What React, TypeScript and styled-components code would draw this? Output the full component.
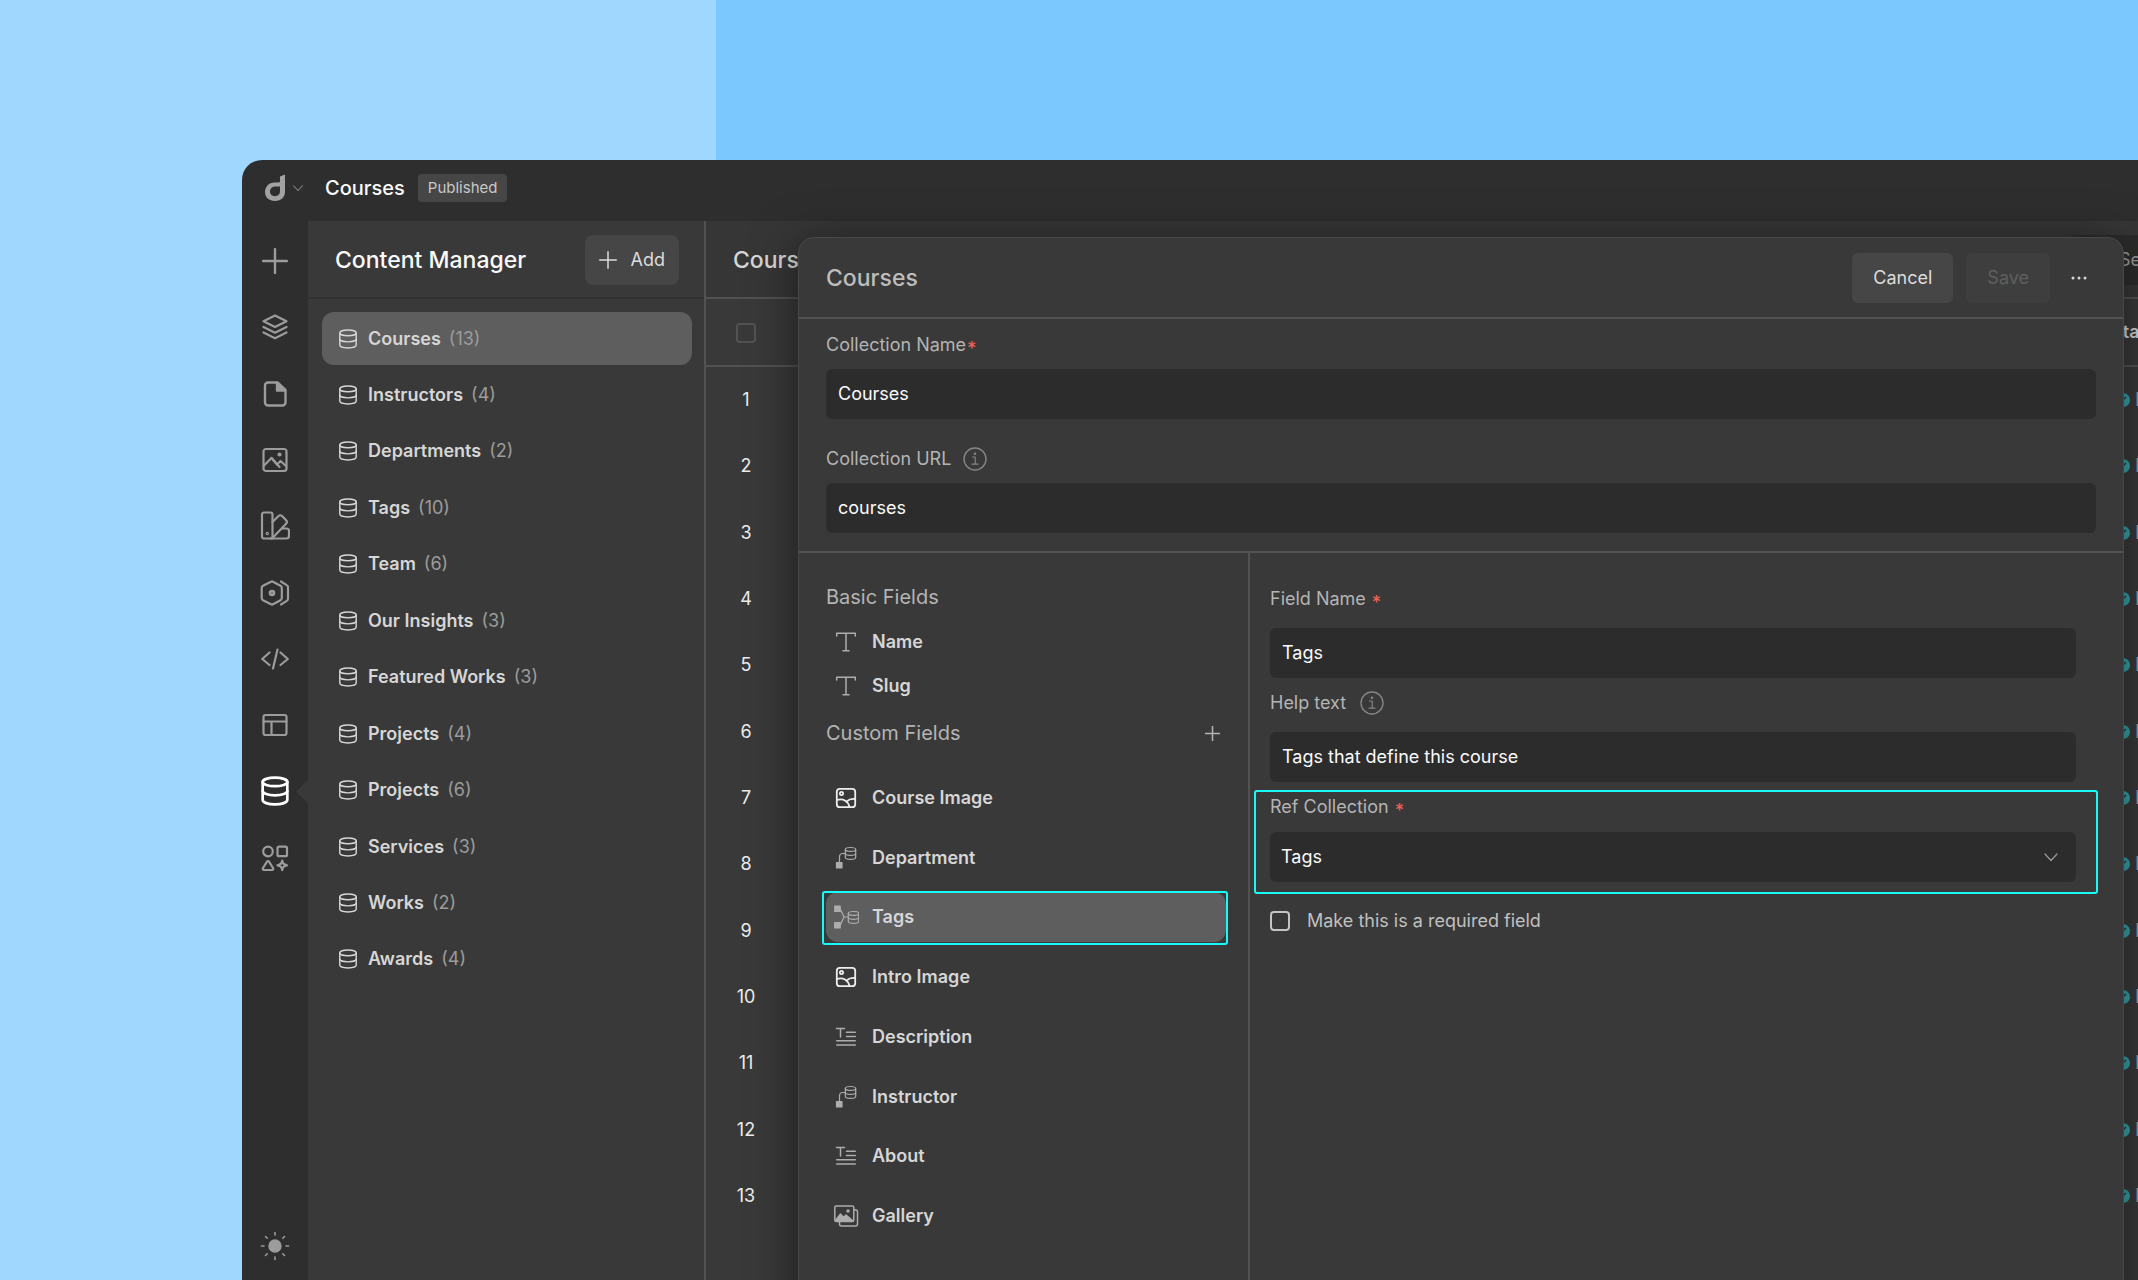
import React from "react";
import styled, { createGlobalStyle, css } from "styled-components";

const GlobalStyle = createGlobalStyle`
  *, *::before, *::after { box-sizing: border-box; }
  body {
    margin: 0;
    overflow: hidden;
    font-family: Inter, "Liberation Sans", sans-serif;
    font-size: 18px;
    line-height: 28px;
    background: #7bc7ff;
  }
  button, input, select { font: inherit; }
  h1, h2, h3, ul { margin: 0; padding: 0; font-weight: 400; }
  ul { list-style: none; }
`;

const color = {
  bar: "#2e2e2e",
  panel: "#393939",
  line: "#525252",
  field: "#2c2c2c",
  button: "#464646",
  selected: "#5e5e5e",
  white: "#fafafa",
  text: "#d6d6d6",
  label: "#b4b4b4",
  muted: "#9c9c9c",
  accent: "#18faf7",
  danger: "#ea6157",
};

/* ---------- icons ---------- */

type IconProps = { size?: number; width?: number };

const Stroke = ({ size = 24, width = 2, box = 24, children }: IconProps & { box?: number; children: React.ReactNode }) => (
  <svg width={size} height={size} viewBox={`0 0 ${box} ${box}`} fill="none" stroke="currentColor" strokeWidth={width} strokeLinecap="round" strokeLinejoin="round" aria-hidden="true">
    {children}
  </svg>
);

const Logo = () => (
  <svg width="24" height="30" viewBox="0 0 24 30" fill="currentColor" aria-hidden="true">
    <path fillRule="evenodd" d="M22 1.5V19c0 5-4 9-10 9S2 24.5 2 19.3C2 13.5 6 9.5 11.5 9.5c3 0 4.5.2 5.5-.7V3.5L22 1.5ZM17 13.6h-4.8c-3 0-5.2 2.2-5.2 5.2 0 2.6 2 4.4 4.9 4.4 3 0 5.1-2 5.1-4.7v-4.900Z" />
  </svg>
);

const ChevronIcon = ({ size = 16, width = 1.2 }: IconProps) => (
  <Stroke size={size} width={width} box={16}><path d="M2 5 8 11.500 14 5" /></Stroke>
);
const PlusIcon = ({ size = 24, width = 2 }: IconProps) => (
  <Stroke size={size} width={width}><path d="M12 1v22M1 12h22" /></Stroke>
);
const LayersIcon = () => (
  <Stroke size={28} width={2.2} box={28}>
    <path d="M14 2.5 25.5 8.300 14 14 2.5 8.300Z" />
    <path d="M2.5 14 14 19.7 25.5 14" />
    <path d="M2.5 19.5 14 25.2 25.5 19.5" />
  </Stroke>
);
const PageIcon = () => (
  <Stroke size={28} width={2.4} box={28}>
    <path d="M7 2.5h9.500L24.500 10v12.500a3 3 0 0 1-3 3H7a3 3 0 0 1-3-3V5.500a3 3 0 0 1 3-3Z" />
    <path d="M16 3v7.500h8Z" fill="currentColor" />
  </Stroke>
);
const ImageIcon = () => (
  <Stroke size={28} width={2.2} box={28}>
    <rect x="2.500" y="3" width="23" height="22" rx="2.500" />
    <path d="m3 19.500 7.500-7.500 5.500 6.500 3.500-3.500 5.500 5" />
    <path d="m10.500 12 8 9" />
    <circle cx="18.500" cy="8.500" r="1" fill="currentColor" />
  </Stroke>
);
const SwatchIcon = () => (
  <Stroke size={30} width={2.2} box={30}>
    <path d="M4 1.500h6.500a2 2 0 0 1 2 2V27.500H4a2 2 0 0 1-2-2v-22a2 2 0 0 1 2-2Z" />
    <path d="m12.500 11 6-6a2.500 2.500 0 0 1 3.600 0l4 4.200a2.500 2.500 0 0 1 0 3.500L12.500 27" />
    <path d="M22 17.500h4.500a2.500 2.500 0 0 1 2.500 2.500v5a2.500 2.500 0 0 1-2.500 2.500H10.500" />
    <circle cx="7.300" cy="22.500" r="0.600" />
  </Stroke>
);
const ComponentIcon = () => (
  <Stroke size={30} width={2.2} box={30}>
    <path d="M11 3.700a2 2 0 0 1 2 0l7.500 4a2.500 2.500 0 0 1 1.300 2.200v10.200a2.500 2.500 0 0 1-1.300 2.200l-7.500 4a2 2 0 0 1-2 0l-8-4a2.500 2.500 0 0 1-1.300-2.200V9.900A2.500 2.500 0 0 1 3 7.700Z" />
    <path d="m21 3.500 5.700 3.600A2.500 2.500 0 0 1 28 9.300v11.400a2.500 2.500 0 0 1-1.300 2.200L21 26.500" />
    <circle cx="12" cy="15" r="2.200" fill="#777" />
  </Stroke>
);
const CodeIcon = () => (
  <Stroke size={28} width={2.2} box={28}>
    <path d="M8.500 7.500 1.200 14l7.300 6M19.500 7.500l7.300 6.500-7.300 6M16.500 4.500l-4.500 19" />
  </Stroke>
);
const LayoutIcon = () => (
  <Stroke size={28} width={2.2} box={28}>
    <rect x="2.500" y="4" width="23" height="20" rx="2" />
    <path d="M2.500 10.500h23M10.500 10.500V24" />
  </Stroke>
);
const DatabaseIcon = ({ size = 20, width = 2 }: IconProps) => (
  <Stroke size={size} width={width} box={28}>
    <ellipse cx="14" cy="5.500" rx="11.500" ry="4" />
    <path d="M2.500 5.500v17c0 2.200 5 4 11.500 4s11.500-1.800 11.500-4v-17" />
    <path d="M2.500 14c0 2.200 5 4 11.500 4s11.500-1.800 11.500-4" />
  </Stroke>
);
const ShapesIcon = () => (
  <Stroke size={28} width={2.2} box={28}>
    <circle cx="7" cy="7.500" r="4.800" />
    <rect x="16.500" y="2.700" width="9.500" height="9.500" rx="1.500" />
    <path d="M6 17.700a1.200 1.200 0 0 1 2 0l4 6.300a1.200 1.200 0 0 1-1 2H3a1.200 1.200 0 0 1-1-2Z" />
    <path d="M21.200 16.500c.7 3.300 1.500 4.100 4.800 4.800-3.300.7-4.100 1.500-4.800 4.800-.7-3.300-1.500-4.100-4.800-4.800 3.300-.7 4.100-1.500 4.800-4.800Z" />
  </Stroke>
);
const SunIcon = () => (
  <Stroke size={30} width={2} box={30}>
    <circle cx="15" cy="15" r="5.700" fill="currentColor" />
    <path d="M15 1.500v2.500M15 26v2.500M1.500 15H4M26 15h2.500M5.500 5.500l1.700 1.700M22.800 22.800l1.700 1.700M5.500 24.500l1.700-1.700M22.800 7.200l1.700-1.700" strokeWidth="1.600" />
  </Stroke>
);

const TextIcon = () => (
  <Stroke size={26} width={1.5} box={26}>
    <path d="M3.700 7V4.200h18.600V7M13 4.200v17.500M10 21.800h6" />
  </Stroke>
);
const PictureIcon = () => (
  <Stroke size={26} width={1.8} box={26}>
    <rect x="3.800" y="3.800" width="18.400" height="18.400" rx="3" />
    <circle cx="8.500" cy="8.500" r="1.600" />
    <path d="M4 15c6-2 11 1 12.500 7M13.500 16.500c3-2.500 5.500-3 8.500-2.500" />
  </Stroke>
);
const SmallDatabase = ({ x, y }: { x: number; y: number }) => (
  <g transform={`translate(${x} ${y})`} strokeWidth="1.200">
    <ellipse cx="5.500" cy="2.400" rx="5.200" ry="1.900" />
    <path d="M.3 2.400v7.800c0 1.200 2.200 2.100 5.200 2.100s5.200-.9 5.200-2.100V2.400M.3 6.200c0 1.200 2.200 2.100 5.200 2.100s5.200-.9 5.200-2.100" />
  </g>
);
const RefIcon = () => (
  <Stroke size={26} width={1.2} box={26}>
    <SmallDatabase x={12} y={2} />
    <path d="M12 8.500H9.500a3 3 0 0 0-3 3V18" />
    <rect x="3.500" y="17.500" width="5.500" height="5.500" fill="currentColor" />
  </Stroke>
);
const MultiRefIcon = () => (
  <Stroke size={26} width={1.2} box={26}>
    <SmallDatabase x={15} y={7} />
    <path d="M7.500 5.500 11 13l-3.500 7.500M11 13h4" />
    <rect x="1.700" y="2" width="5.500" height="5.500" fill="currentColor" />
    <rect x="1.700" y="18.500" width="5.500" height="5.500" fill="currentColor" />
  </Stroke>
);
const RichTextIcon = () => (
  <Stroke size={26} width={1.5} box={26}>
    <path d="M3.500 4.500h8M7.500 4.500V13M13.500 8.200h8.800M13.500 12.500h8.800M3.700 16.800h18.600M3.700 21h18.600" />
  </Stroke>
);
const GalleryIcon = () => (
  <Stroke size={26} width={1.5} box={26}>
    <rect x="1.800" y="3" width="19" height="15.500" rx="1.500" />
    <path d="m2.500 17.500 5-6.500 3 3.500 2.500-2.500 6.500 5.500Z" fill="currentColor" />
    <circle cx="15" cy="8" r="1" fill="currentColor" />
    <path d="M21 7h2a1.500 1.500 0 0 1 1.500 1.500V21a2 2 0 0 1-2 2h-14a2 2 0 0 1-2-2v-2.500" />
  </Stroke>
);
const InfoIcon = () => (
  <Stroke size={24} width={1.4} box={24}>
    <circle cx="12" cy="12" r="11" />
    <path d="M9.500 10h2.700v7M9 17.200h6" strokeWidth="1.200" />
    <circle cx="12" cy="6.800" r="0.600" fill="currentColor" />
  </Stroke>
);
const MoreIcon = () => (
  <svg width="16" height="4" viewBox="0 0 16 4" fill="currentColor" aria-hidden="true">
    <circle cx="2" cy="2" r="1.500" /><circle cx="8" cy="2" r="1.500" /><circle cx="14" cy="2" r="1.500" />
  </svg>
);
const CheckDot = () => (
  <svg width="14" height="14" viewBox="0 0 14 14" fill="none" aria-hidden="true">
    <circle cx="7" cy="7" r="7" fill="#36a3a8" />
    <path d="m4 6 2 2 4-4" stroke="#2c3a3c" strokeWidth="1.500" />
  </svg>
);

/* ---------- shell ---------- */

const Backdrop = styled.div`
  height: 100vh;
  padding: 160px 0 0 242px;
  overflow: hidden;
  background: linear-gradient(to right, #a0d7ff 716px, #7bc7ff 716px);
`;

const Window = styled.div`
  position: relative;
  display: grid;
  grid-template: 61px minmax(0, 1fr) / 66px 398px minmax(0, 1fr);
  height: 100%;
  margin-right: -160px;
  border-top-left-radius: 20px;
  overflow: hidden;
  background: ${color.bar};
  color: ${color.text};
`;

const TopBar = styled.header`
  grid-column: 1 / -1;
  display: flex;
  align-items: center;
  padding: 0 21px 6px;
`;

const LogoButton = styled.button`
  display: flex;
  align-items: center;
  gap: 5px;
  width: 62px;
  padding: 0;
  border: 0;
  background: none;
  color: #a2a2a2;
`;

const PageName = styled.h1`
  font-size: 20px;
  font-weight: 500;
  color: ${color.white};
`;

const Badge = styled.span`
  margin-left: 13px;
  padding: 0 10px;
  border-radius: 4px;
  background: ${color.button};
  color: #c8c8c8;
  font-size: 15px;
`;

const Rail = styled.nav`
  display: flex;
  flex-direction: column;
  justify-content: space-between;
  padding: 7px 0 1px;
`;

const RailList = styled.ul`
  display: grid;
  grid-auto-rows: 1fr;
  height: 663px;
`;

const RailItem = styled.li<{ $active?: boolean }>`
  position: relative;
  ${({ $active }) => $active && css`
    &::after {
      content: "";
      position: absolute;
      right: 0;
      top: 50%;
      width: 12px;
      height: 24px;
      margin-top: -12px;
      background: ${color.panel};
      clip-path: polygon(0 50%, 100% 0, 100% 100%);
    }
  `}
`;

const RailButton = styled.button<{ $active?: boolean }>`
  display: flex;
  align-items: center;
  justify-content: center;
  width: 100%;
  height: 66px;
  padding: 0;
  border: 0;
  background: none;
  color: ${({ $active }) => ($active ? "#ffffff" : "#9c9c9c")};
`;

/* ---------- collections panel ---------- */

const Panel = styled.aside`
  border-right: 2px solid ${color.line};
  background: ${color.panel};
`;

const PanelHeader = styled.div`
  display: flex;
  align-items: center;
  justify-content: space-between;
  height: 78px;
  padding: 1px 25px 0 27px;
  border-bottom: 2px solid #323232;
`;

const PanelTitle = styled.h2`
  font-size: 23px;
  font-weight: 500;
  color: ${color.white};
`;

const Button = styled.button`
  display: flex;
  align-items: center;
  justify-content: center;
  height: 50px;
  padding: 0 21px;
  border: 0;
  border-radius: 6px;
  background: ${color.button};
  color: #dcdcdc;
  &:disabled { background: #3e3e3e; color: #5f5f5f; }
`;

const AddButton = styled(Button)`
  gap: 14px;
  padding: 0 14px;
  border-radius: 8px;
`;

const CollectionList = styled.ul`
  display: grid;
  grid-auto-rows: 53px;
  align-content: space-between;
  height: 674px;
  margin: 13px 12px 0 14px;
`;

const CollectionButton = styled.button<{ $selected?: boolean }>`
  display: flex;
  align-items: center;
  width: 100%;
  height: 100%;
  padding: 0 16px;
  border: 0;
  border-radius: 12px;
  background: ${({ $selected }) => ($selected ? color.selected : "none")};
  color: ${color.text};
  font-weight: 600;
`;

const CollectionName = styled.span`
  margin: 0 8px 0 10px;
`;

const Count = styled.span`
  color: ${color.muted};
  font-weight: 400;
`;

/* ---------- items table ---------- */

const Main = styled.main`
  background: ${color.panel};
  min-width: 0;
`;

const MainHeader = styled.div`
  display: flex;
  align-items: center;
  justify-content: space-between;
  height: 78px;
  padding: 1px 29px 0 27px;
  border-bottom: 2px solid ${color.line};
  background: #363636;
`;

const MainTitle = styled.h2`
  font-size: 23px;
  font-weight: 500;
`;

const Search = styled.input`
  width: 200px;
  height: 50px;
  padding: 0 12px 0 50px;
  border: 0;
  border-radius: 6px;
  background: ${color.field};
  &::placeholder { color: ${color.muted}; opacity: 1; }
`;

const Table = styled.table`
  width: 100%;
  border-collapse: separate;
  border-spacing: 0;
  table-layout: fixed;
  th, td { padding: 0; }
`;

const HeadRow = styled.tr`
  height: 68px;
  th { border-bottom: 2px solid ${color.line}; }
`;

const IndexHead = styled.th`
  width: 80px;
  line-height: 20px;
`;

const StatusHead = styled.th`
  width: 190px;
  text-align: left;
  text-indent: 3px;
  font-weight: 600;
`;

const ItemRow = styled.tr`
  height: 66px;
  &:nth-child(3n) { height: 67px; }
`;

const IndexCell = styled.td`
  text-align: center;
  color: #ececec;
`;

const Status = styled.span`
  display: flex;
  align-items: center;
  gap: 5px;
  margin-left: 8px;
  color: ${color.muted};
`;

const CheckBox = styled.input<{ $bright?: boolean }>`
  appearance: none;
  width: 20px;
  height: 20px;
  margin: 0;
  vertical-align: middle;
  border: 2px solid ${({ $bright }) => ($bright ? "#c4c4c4" : color.line)};
  border-radius: 4px;
`;

/* ---------- settings dialog ---------- */

const Dialog = styled.section`
  position: absolute;
  top: 77px;
  bottom: -40px;
  left: 556px;
  right: 174px;
  display: flex;
  flex-direction: column;
  border: 1px solid #484848;
  border-radius: 16px 16px 0 0;
  background: ${color.panel};
  box-shadow: 0 8px 48px rgba(0, 0, 0, 0.5);
`;

const DialogHeader = styled.div`
  display: flex;
  align-items: center;
  height: 81px;
  padding: 0 28px 0 27px;
  border-bottom: 2px solid ${color.line};
`;

const DialogTitle = styled.h2`
  flex: 1;
  font-size: 23px;
  font-weight: 500;
  color: #bdbdbd;
`;

const DialogActions = styled.div`
  display: flex;
  align-items: center;
  gap: 13px;
`;

const MoreButton = styled.button`
  display: flex;
  align-items: center;
  justify-content: center;
  width: 32px;
  height: 32px;
  padding: 0;
  border: 0;
  background: none;
  color: ${color.text};
`;

const CollectionForm = styled.div`
  display: flex;
  flex-direction: column;
  gap: 26px;
  padding: 12px 27px 18px;
  border-bottom: 2px solid ${color.line};
`;

const Field = styled.div<{ $gap: number }>`
  display: flex;
  flex-direction: column;
  gap: ${({ $gap }) => $gap}px;
`;

const Label = styled.label<{ $space?: number }>`
  display: flex;
  align-items: center;
  gap: ${({ $space = 0 }) => $space}px;
  color: ${color.label};
`;

const Required = styled.span`
  align-self: flex-end;
  line-height: 20px;
  font-weight: 500;
  color: ${color.danger};
`;

const InfoMark = styled.span`
  display: flex;
  color: #858585;
`;

const control = css`
  width: 100%;
  height: 50px;
  border: 0;
  border-radius: 6px;
  background: ${color.field};
  color: ${color.white};
`;

const TextBox = styled.input`
  ${control}
  padding: 0 12px 2px;
`;

const SelectWrap = styled.div`
  display: grid;
  align-items: center;
  > * { grid-area: 1 / 1; }
`;

const Select = styled.select`
  ${control}
  padding: 0 11px;
  appearance: none;
`;

const SelectArrow = styled.span`
  display: flex;
  justify-self: end;
  margin-right: 17px;
  color: #9a9a9a;
  pointer-events: none;
`;

const DialogBody = styled.div`
  flex: 1;
  display: grid;
  grid-template-columns: 451px minmax(0, 1fr);
`;

const FieldsColumn = styled.div`
  padding: 30px 22px 0 27px;
  border-right: 2px solid ${color.line};
`;

const GroupHeader = styled.div`
  display: flex;
  align-items: center;
  justify-content: space-between;
  padding-right: 6px;
  color: ${color.label};
`;

const GroupTitle = styled.h3`
  font-size: 20px;
`;

const GhostButton = styled.button`
  display: flex;
  padding: 0;
  border: 0;
  background: none;
  color: inherit;
`;

const BasicList = styled.ul`
  display: grid;
  grid-auto-rows: 44px;
  padding: 9px 0 11px;
`;

const CustomList = styled.ul`
  display: grid;
  grid-auto-rows: 50px;
  align-content: space-between;
  height: 468px;
  margin-top: 26px;
`;

const FieldItem = styled.li<{ $selected?: boolean }>`
  position: relative;
  ${({ $selected }) => $selected && css`
    &::after {
      content: "";
      position: absolute;
      inset: -1px -2px -3px -4px;
      border: 2px solid ${color.accent};
      border-radius: 3px;
      pointer-events: none;
    }
  `}
`;

const FieldButton = styled.button<{ $selected?: boolean; $bright?: boolean }>`
  display: flex;
  align-items: center;
  gap: 13px;
  width: 100%;
  height: 100%;
  padding: 0 7px;
  border: 0;
  border-radius: 12px;
  background: ${({ $selected }) => ($selected ? color.selected : "none")};
  color: ${color.text};
  font-weight: 600;
  svg { color: ${({ $bright }) => ($bright ? "#ededed" : "#adadad")}; }
`;

const SettingsColumn = styled.div`
  display: flex;
  flex-direction: column;
  gap: 11px;
  padding: 32px 47px 0 20px;
`;

const Highlighted = styled.div`
  position: relative;
  &::after {
    content: "";
    position: absolute;
    inset: -3px -22px -12px -16px;
    border: 2px solid ${color.accent};
    border-radius: 3px;
    pointer-events: none;
  }
`;

const CheckLabel = styled.label`
  display: flex;
  align-items: center;
  gap: 17px;
  padding-top: 14px;
  color: #c0c0c0;
`;

/* ---------- data ---------- */

const railItems = [
  { name: "Add", icon: <PlusIcon size={26} width={2.2} /> },
  { name: "Layers", icon: <LayersIcon /> },
  { name: "Pages", icon: <PageIcon /> },
  { name: "Media", icon: <ImageIcon /> },
  { name: "Styles", icon: <SwatchIcon /> },
  { name: "Components", icon: <ComponentIcon /> },
  { name: "Code", icon: <CodeIcon /> },
  { name: "Layouts", icon: <LayoutIcon /> },
  { name: "Content", icon: <DatabaseIcon size={30} width={2.5} />, active: true },
  { name: "Apps", icon: <ShapesIcon /> },
];

const collections: [string, number][] = [
  ["Courses", 13], ["Instructors", 4], ["Departments", 2], ["Tags", 10], ["Team", 6], ["Our Insights", 3],
  ["Featured Works", 3], ["Projects", 4], ["Projects", 6], ["Services", 3], ["Works", 2], ["Awards", 4],
];

const customFields = [
  { name: "Course Image", icon: <PictureIcon />, bright: true },
  { name: "Department", icon: <RefIcon /> },
  { name: "Tags", icon: <MultiRefIcon />, selected: true },
  { name: "Intro Image", icon: <PictureIcon />, bright: true },
  { name: "Description", icon: <RichTextIcon /> },
  { name: "Instructor", icon: <RefIcon /> },
  { name: "About", icon: <RichTextIcon /> },
  { name: "Gallery", icon: <GalleryIcon /> },
];

const rows = Array.from({ length: 13 }, (_, i) => i + 1);

export default function App() {
  return (
    <Backdrop>
      <GlobalStyle />
      <Window>
        <TopBar>
          <LogoButton aria-label="Main menu"><Logo /><ChevronIcon size={12} width={1.3} /></LogoButton>
          <PageName>Courses</PageName>
          <Badge>Published</Badge>
        </TopBar>

        <Rail aria-label="Tools">
          <RailList>
            {railItems.map((item) => (
              <RailItem key={item.name} $active={item.active}>
                <RailButton $active={item.active} aria-label={item.name}>{item.icon}</RailButton>
              </RailItem>
            ))}
          </RailList>
          <RailButton aria-label="Theme"><SunIcon /></RailButton>
        </Rail>

        <Panel>
          <PanelHeader>
            <PanelTitle>Content Manager</PanelTitle>
            <AddButton><PlusIcon size={18} width={2} />Add</AddButton>
          </PanelHeader>
          <CollectionList>
            {collections.map(([name, count], i) => (
              <li key={i}>
                <CollectionButton $selected={i === 0}>
                  <DatabaseIcon />
                  <CollectionName>{name}</CollectionName>
                  <Count>({count})</Count>
                </CollectionButton>
              </li>
            ))}
          </CollectionList>
        </Panel>

        <Main>
          <MainHeader>
            <MainTitle>Courses</MainTitle>
            <Search placeholder="Search" aria-label="Search" />
          </MainHeader>
          <Table>
            <thead>
              <HeadRow>
                <IndexHead><CheckBox type="checkbox" aria-label="Select all" /></IndexHead>
                <th />
                <StatusHead>Status</StatusHead>
              </HeadRow>
            </thead>
            <tbody>
              {rows.map((n) => (
                <ItemRow key={n}>
                  <IndexCell>{n}</IndexCell>
                  <td />
                  <td><Status><CheckDot />Published</Status></td>
                </ItemRow>
              ))}
            </tbody>
          </Table>
        </Main>

        <Dialog role="dialog" aria-labelledby="dialog-title">
          <DialogHeader>
            <DialogTitle id="dialog-title">Courses</DialogTitle>
            <DialogActions>
              <Button>Cancel</Button>
              <Button disabled>Save</Button>
              <MoreButton aria-label="More"><MoreIcon /></MoreButton>
            </DialogActions>
          </DialogHeader>

          <CollectionForm>
            <Field $gap={10}>
              <Label htmlFor="collection-name" $space={1}>Collection Name<Required>*</Required></Label>
              <TextBox id="collection-name" defaultValue="Courses" />
            </Field>
            <Field $gap={10}>
              <Label htmlFor="collection-url" $space={12}>Collection URL<InfoMark><InfoIcon /></InfoMark></Label>
              <TextBox id="collection-url" defaultValue="courses" />
            </Field>
          </CollectionForm>

          <DialogBody>
            <FieldsColumn>
              <GroupHeader><GroupTitle>Basic Fields</GroupTitle></GroupHeader>
              <BasicList>
                {["Name", "Slug"].map((name) => (
                  <li key={name}><FieldButton><TextIcon />{name}</FieldButton></li>
                ))}
              </BasicList>
              <GroupHeader>
                <GroupTitle>Custom Fields</GroupTitle>
                <GhostButton aria-label="Add custom field"><PlusIcon size={15} width={2.5} /></GhostButton>
              </GroupHeader>
              <CustomList>
                {customFields.map((f) => (
                  <FieldItem key={f.name} $selected={f.selected}>
                    <FieldButton $selected={f.selected} $bright={f.bright}>{f.icon}{f.name}</FieldButton>
                  </FieldItem>
                ))}
              </CustomList>
            </FieldsColumn>

            <SettingsColumn>
              <Field $gap={15}>
                <Label htmlFor="field-name" $space={6}>Field Name<Required>*</Required></Label>
                <TextBox id="field-name" defaultValue="Tags" />
              </Field>
              <Field $gap={15}>
                <Label htmlFor="help-text" $space={14}>Help text<InfoMark><InfoIcon /></InfoMark></Label>
                <TextBox id="help-text" defaultValue="Tags that define this course" />
              </Field>
              <Highlighted>
                <Field $gap={11}>
                  <Label htmlFor="ref-collection" $space={6}>Ref Collection<Required>*</Required></Label>
                  <SelectWrap>
                    <Select id="ref-collection" defaultValue="Tags"><option>Tags</option></Select>
                    <SelectArrow><ChevronIcon /></SelectArrow>
                  </SelectWrap>
                </Field>
              </Highlighted>
              <CheckLabel>
                <CheckBox type="checkbox" $bright />
                Make this is a required field
              </CheckLabel>
            </SettingsColumn>
          </DialogBody>
        </Dialog>
      </Window>
    </Backdrop>
  );
}
